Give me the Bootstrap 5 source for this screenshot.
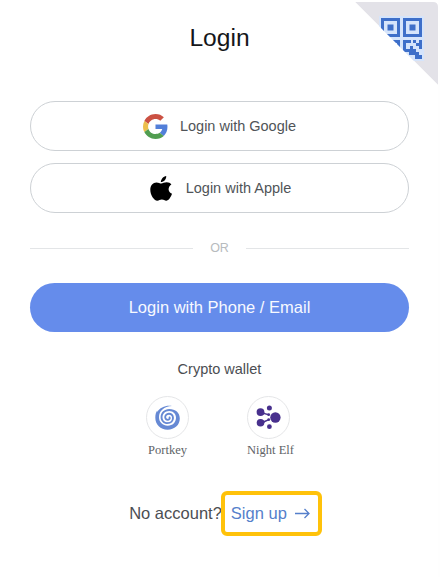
<!DOCTYPE html>
<html lang="en">
<head>
<meta charset="utf-8">
<meta name="viewport" content="width=device-width, initial-scale=1">
<title>Login</title>
<link href="https://cdn.jsdelivr.net/npm/bootstrap@5.3.0/dist/css/bootstrap.min.css" rel="stylesheet">
<style>
body{background:#fefefe;font-family:"Liberation Sans",Arial,sans-serif;color:#4b4e52;overflow:hidden}
.login-panel{width:438px;height:577px;padding:2px 29px 0 30px}
.login-title{font-size:24.6px;line-height:30px;margin-top:21px;margin-bottom:48px;color:#15171a;font-weight:400;padding-left:0}
.qr-corner{top:2px;right:0;width:83px;height:83px}
.login-btn{height:50px;font-size:14.5px;color:#505458;border:1px solid #cdd1d5;background:#fff}
.login-btn span{padding-top:2px}
.google-logo{margin-right:12px}
.apple-logo{margin-right:14px}
.apple-btn{padding:0 0 0 2px}
.login-main{height:49px;font-size:16.5px;background:#658ceb;color:#f7f9ff;border:0}
.provider-list{gap:12px}
.separator{margin:27px 0 26px;gap:17px;height:17px;font-size:12.5px;color:#b7bbbe}
.separator-line{height:1px;background:#e3e5e7}
.wallet-title{font-size:14.5px;line-height:18px;margin-top:28px}
.wallet-list{margin-top:18px;padding-right:3px}
.wallet-item{width:101px;font:12.5px/15px "Liberation Serif","Times New Roman",serif;color:#606367}
.wallet-icon{width:43px;height:43px;border:1px solid #e5e6e8;margin-bottom:4px}
.wallet-name{white-space:nowrap}
.account-row{margin-top:33px;font-size:16.5px;padding-left:12px}
.signup{width:101px;height:45px;border:4px solid #ffc20a;border-radius:6px;color:#557fcb;gap:8px;margin-left:-1px;padding-right:2px;white-space:nowrap}
</style>
</head>
<body>
<main class="login-panel position-relative bg-white">
<svg class="qr-corner position-absolute" viewBox="0 0 83 83" aria-label="QR code login">
<defs><clipPath id="fold"><path d="M0 0H78Q83 0 83 5V83Z"/></clipPath></defs>
<g clip-path="url(#fold)">
<path d="M0 0H83V83Z" fill="#e3e2e8"/>
<path d="M24 14H69V59H24Z" fill="#d5e4fb"/>
<g fill="none" stroke="#3e6fc9" stroke-width="3"><path d="M27.5 17.5H43.5V33.5H27.5ZM49.5 17.5H65.5V33.5H49.5ZM27.5 39.5H43.5V55.5H27.5Z"/></g>
<path fill="#3e6fc9" d="M32.5 22.5h6v6h-6ZM54.5 22.5h6v6h-6ZM32.5 44.5h6v6h-6ZM48 38h8v3h-5v6h5v3h3v3h-5v-3h-6ZM58 38h3v3h3v-3h3v9h-3v-3h-3v-3h-3ZM55 44h3v3h3v3h3v3h3v4h-7v-4h-3v-3h-2Z"/>
</g>
</svg>
<h1 class="login-title text-center">Login</h1>
<div class="provider-list d-flex flex-column">
<button class="login-btn btn rounded-pill d-flex align-items-center justify-content-center p-0" type="button">
<svg class="google-logo" width="25" height="25" viewBox="0 0 48 48">
<path fill="#cb5143" d="M24 9.5c3.54 0 6.71 1.22 9.21 3.6l6.85-6.85C35.9 2.38 30.47 0 24 0 14.62 0 6.51 5.38 2.56 13.22l7.98 6.19C12.43 13.72 17.74 9.5 24 9.5z"/>
<path fill="#527fd9" d="M46.98 24.55c0-1.57-.15-3.09-.38-4.55H24v9.02h12.94c-.58 2.96-2.26 5.48-4.78 7.18l7.73 6c4.51-4.18 7.09-10.36 7.09-17.65z"/>
<path fill="#ecbf4c" d="M10.53 28.59c-.48-1.45-.76-2.99-.76-4.59s.27-3.14.76-4.59l-7.98-6.19C.92 16.46 0 20.12 0 24s.92 7.54 2.56 10.78l7.97-6.19z"/>
<path fill="#519d50" d="M24 48c6.48 0 11.93-2.13 15.89-5.81l-7.73-6c-2.15 1.45-4.92 2.3-8.16 2.3-6.26 0-11.57-4.22-13.47-9.91l-7.98 6.19C6.51 42.62 14.62 48 24 48z"/>
</svg><span>Login with Google</span></button>
<button class="login-btn apple-btn btn rounded-pill d-flex align-items-center justify-content-center" type="button">
<svg class="apple-logo" width="22" height="25" viewBox="0 0 22 25"><path d="M10.8 6.1C11.1 3 13.3.4 16.2 0C16.5 3.2 14 6 10.8 6.1ZM11.2 7.5C12.8 7.5 14.3 6.3 16.7 6.3C18.7 6.3 20.4 7.2 21.4 8.5C17.4 11.2 17.8 16 22 17.7C20.9 20.9 18.7 24.7 16.2 24.7C14.5 24.7 13.9 23.6 11.9 23.6C9.8 23.6 9.1 24.7 7.3 24.7C4 24.7.3 19 .3 13.8C.3 9.2 3 6.4 6.5 6.4C8.5 6.4 9.9 7.5 11.2 7.5Z"/></svg><span>Login with Apple</span></button>
</div>
<div class="separator d-flex align-items-center"><div class="separator-line flex-fill"></div><span>OR</span><div class="separator-line flex-fill"></div></div>
<button class="login-main btn rounded-pill w-100 p-0" type="button">Login with Phone / Email</button>
<div class="wallet-title text-center">Crypto wallet</div>
<div class="wallet-list d-flex justify-content-center">
<div class="wallet-item d-flex flex-column align-items-center">
<div class="wallet-icon rounded-circle d-flex align-items-center justify-content-center">
<svg width="25" height="25" viewBox="0 0 25 25"><path fill="#6689d4" d="M17 1C9 1.500 4 5.800 4 12.300C4 17.200 7.800 20.700 12.700 20.700C17.600 20.700 21 17.100 21 12.700C21 8.800 18 6 14.200 6C10.300 6 7.500 8.800 7.500 12.200C7.500 15.200 9.800 17.300 12.500 17.300V19C8.500 19 5.600 16 5.600 12.200C5.600 7.600 9.300 4 14.200 4C20.500 4 24.800 7.800 24.800 13.500C24.800 20 19.500 24.700 12.600 24.700C5.500 24.700.3 19.500.3 12.700C.3 9.500 1 7.200 2.200 5.500L2 7.100C5 2.300 11 0 17 1Z"/><path fill="none" stroke="#6689d4" stroke-width="1.900" stroke-linecap="round" d="M12.500 18.100C15.900 18.100 18 15.700 18 12.900C18 10.300 16.100 8.600 13.800 8.700C11.600 8.800 10.100 10.400 10.200 12.300C10.300 14 11.600 15 13 14.800C14.300 14.600 15 13.500 14.600 12.500"/></svg>
</div><span class="wallet-name">Portkey</span></div>
<div class="wallet-item d-flex flex-column align-items-center">
<div class="wallet-icon rounded-circle d-flex align-items-center justify-content-center">
<svg width="25" height="25" viewBox="0 0 25 25" fill="#48308d"><circle cx="4.5" cy="7.1" r="3.9"/><circle cx="4.5" cy="17.8" r="3.8"/><circle cx="13.4" cy="3" r="2.5"/><circle cx="13.4" cy="21.7" r="2.4"/><circle cx="19.4" cy="12.5" r="5.2"/><circle cx="12.7" cy="9.7" r="1.4"/><circle cx="12.7" cy="14.7" r="1.4"/><path d="M6.500 5.400L8.900 8.100L12.800 8.900V10.400L8.200 9.200L5.500 10ZM5.500 14.600L8.200 15.800L12.700 14V15.600L8.900 17.200L6.700 20Z"/></svg>
</div><span class="wallet-name ps-1">Night Elf</span></div>
</div>
<div class="account-row d-flex justify-content-center align-items-center"><span>No account?</span><a href="#" class="signup d-flex align-items-center justify-content-center text-decoration-none"><span>Sign up</span><svg width="15" height="11" viewBox="0 0 15 11" fill="none" stroke="currentColor" stroke-width="1.3"><path d="M0 5.500H14M9.500 1L14 5.500L9.500 10"/></svg></a></div>
</main>
<script src="https://cdn.jsdelivr.net/npm/bootstrap@5.3.0/dist/js/bootstrap.bundle.min.js"></script>
</body>
</html>
